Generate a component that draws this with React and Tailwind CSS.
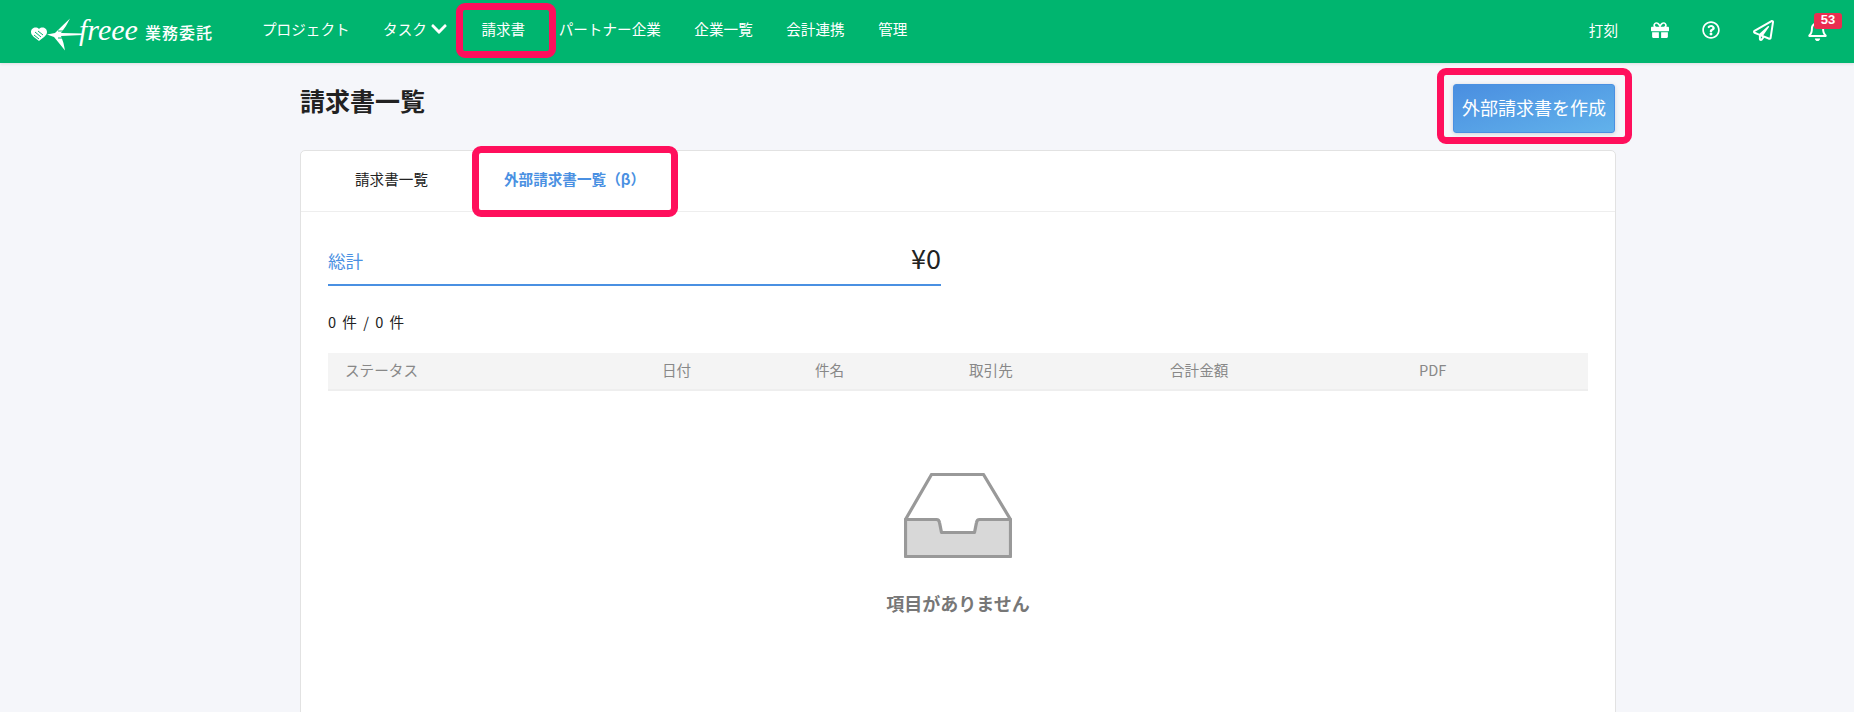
import { FaChevronDown, FaGift, FaRegBell, FaRegPaperPlane, FaRegQuestionCircle } from 'react-icons/fa'

const jp = '[font-family:"Noto_Sans_CJK_JP","Liberation_Sans",sans-serif]'

const navItems = ['プロジェクト', 'タスク', '請求書', 'パートナー企業', '企業一覧', '会計連携', '管理']

const columns = [
  { label: 'ステータス', width: 'w-[317px]' },
  { label: '日付', width: 'w-[153px]' },
  { label: '件名', width: 'w-[154px]' },
  { label: '取引先', width: 'w-[201px]' },
  { label: '合計金額', width: 'w-[249px]' },
  { label: 'PDF', width: 'flex-1' },
]

function Callout({ className }) {
  return <span className={`absolute border-[7px] border-[#ff0f5c] rounded-[9px] pointer-events-none ${className}`} />
}

function Logo() {
  return (
    <div className="flex items-center w-[183px] text-white">
      <svg width="56" height="40" viewBox="0 0 56 40" className="shrink-0 mt-[2px]">
        <path d="M8 16c-3-3-8-1-8 3 0 4 5 6 8 9 3-3 8-5 8-9 0-4-5-6-8-3z" fill="#fff" />
        <path d="M4 19l6 5M3 22l5 4M7 18l5 4" stroke="#00b56f" strokeWidth="1" />
        <path d="M16 21.500 24 20Q32 12 39 5.500 35 14 30 20L52 20.500V22L30 23Q33 30 34 37.500 28 30 23 24Z" fill="#fff" />
        <path d="M27 18h11M27 25h8" stroke="#00b56f" strokeWidth="1" />
      </svg>
      <span className="[font-family:'Liberation_Serif',serif] italic text-[30px] leading-none w-[58px] -mt-1 ml-[-8px]">freee</span>
      <span className={`${jp} text-[16px] font-medium tracking-[1px] ml-[8px] mt-[1px] whitespace-nowrap`}>業務委託</span>
    </div>
  )
}

function Header() {
  return (
    <header className="h-[63px] shrink-0 bg-[#00b56f] shadow-[0_1px_3px_rgba(0,0,0,0.1)] flex items-center pl-[31px] pr-[26px] text-white">
      <Logo />
      <nav className="flex items-center gap-[33.5px] ml-[48px] mb-[6px] text-[14.6px] leading-[22px]">
        {navItems.map((item) => (
          <div key={item} className="relative flex items-center gap-[3px] whitespace-nowrap">
            {item}
            {item === 'タスク' && <FaChevronDown className="text-[18px]" />}
            {item === '請求書' && <Callout className="-left-[25px] -right-[31px] -top-[15px] -bottom-[18px]" />}
          </div>
        ))}
      </nav>
      <div className="ml-auto flex items-center mb-[2px]">
        <span className="text-[14.6px] mr-[33px] mb-[2px]">打刻</span>
        <FaGift className="text-[18px] mr-[33px]" />
        <FaRegQuestionCircle className="text-[18px] mr-[33px]" />
        <FaRegPaperPlane className="text-[21px] mr-[33px]" />
        <div className="relative">
          <FaRegBell className="text-[21px]" />
          <span className="absolute -top-[7px] left-[7px] h-[16px] w-[28px] rounded-[3px] bg-[#ea2d50] text-[13px] leading-[13px] font-bold text-center [font-family:'Liberation_Sans',sans-serif]">53</span>
        </div>
      </div>
    </header>
  )
}

function Inbox() {
  return (
    <svg width="108" height="85" viewBox="-1.5 -1.5 108 85">
      <path d="M0 45 26 0H78l27 45" fill="none" stroke="#999" strokeWidth="3.2" strokeLinejoin="round" />
      <path d="M0 45H31q2.500 0 3 3l2 10H69l2-10q.5-3 3-3H105V82H0Z" fill="#d8d8d8" stroke="#999" strokeWidth="3.2" strokeLinejoin="round" />
    </svg>
  )
}

export default function App() {
  return (
    <div className={`${jp} h-[712px] overflow-hidden bg-[#f5f6fa] text-[#222] flex flex-col`}>
      <Header />
      <main className="w-[1316px] ml-[300px] flex-1 flex flex-col">
        <div className="flex justify-between items-start h-[87px] pt-[21px]">
          <h1 className="text-[25px] leading-[32px] font-bold">請求書一覧</h1>
          <div className="relative mr-[1px]">
            <button className="w-[162px] h-[49px] pb-[3px] rounded-[3px] border border-[#4a90e2] bg-linear-to-br from-[#4a8ee0] to-[#62b2eb] text-white text-[18px] shadow-[0_1px_4px_rgba(0,0,0,0.15)]">
              外部請求書を作成
            </button>
            <Callout className="-left-[16px] -right-[17px] -top-[16px] -bottom-[11px]" />
          </div>
        </div>

        <section className="bg-white border border-[#e2e2e2] rounded-t-[5px] min-h-[600px]">
          <div className="flex h-[61px] border-b border-[#eeeeee] text-[14.6px] pb-[5px]">
            <div className="ml-[54px] self-center">請求書一覧</div>
            <div className="relative ml-[76px] self-center font-bold text-[#4a90e2] whitespace-nowrap">
              外部請求書一覧（β）
              <Callout className="-left-[32px] -right-[33px] -top-[22px] -bottom-[28px]" />
            </div>
          </div>

          <div className="px-[27px]">
            <div className="w-[613px] h-[74px] border-b-2 border-[#4a90e2] flex justify-between items-end pb-[6px]">
              <span className="text-[#4a90e2] text-[17.6px] mb-[4px]">総計</span>
              <span className="text-[27px] leading-[40px]">¥0</span>
            </div>
            <div className="text-[14.6px] mt-[25px] leading-[22px] [word-spacing:3px]">0 件 / 0 件</div>
            <div className="flex items-center h-[38px] mt-[20px] pl-[17px] pb-[3px] bg-[#f4f4f4] border-b-2 border-[#eeeeee] text-[14.6px] text-[#888]">
              {columns.map((col) => (
                <div key={col.label} className={col.width}>{col.label}</div>
              ))}
            </div>
            <div className="flex flex-col items-center pt-[82px]">
              <Inbox />
              <p className="mt-[32px] text-[18px] leading-[26px] font-bold text-[#777]">項目がありません</p>
            </div>
          </div>
        </section>
      </main>
    </div>
  )
}
